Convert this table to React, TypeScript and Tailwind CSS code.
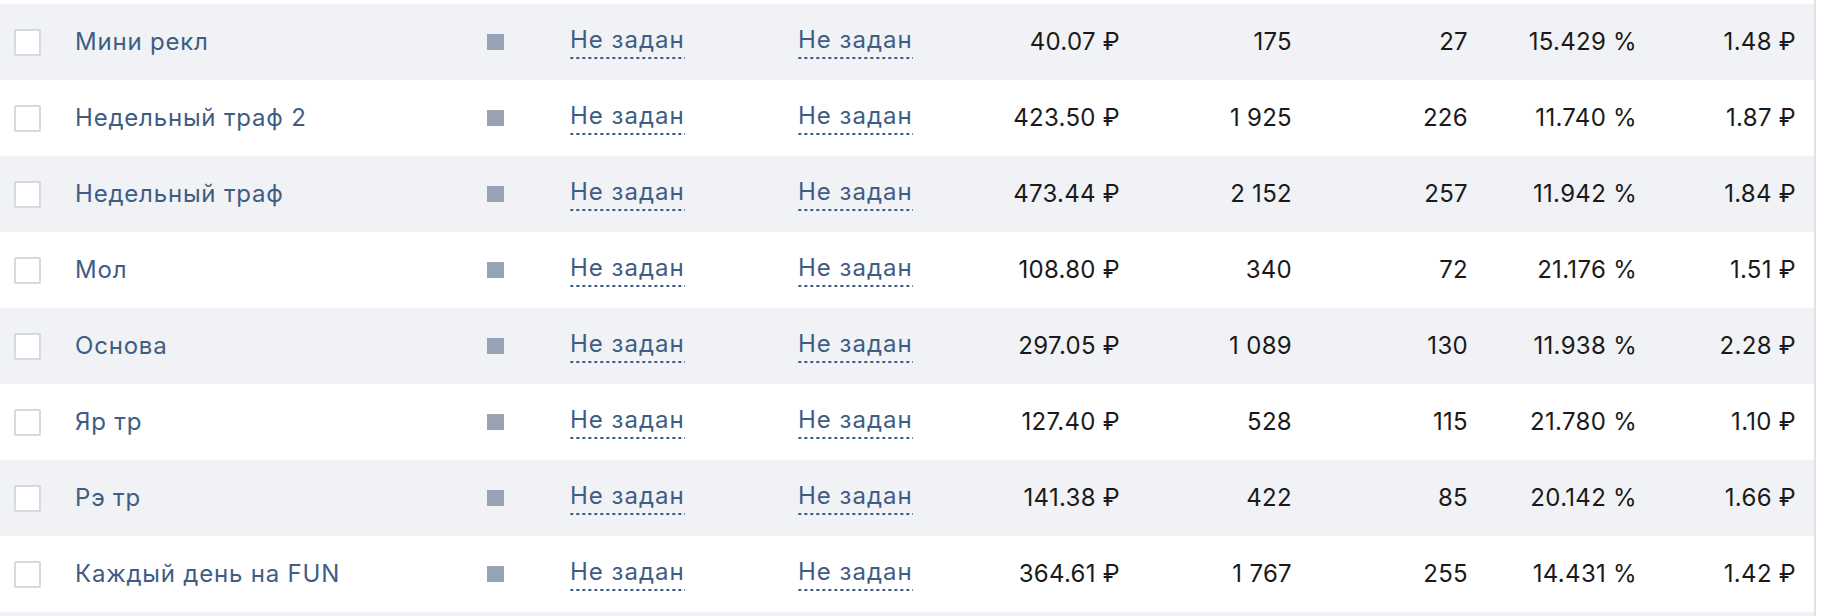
import React from "react";

type Row = { name: string; amount: string; shows: string; clicks: string; ctr: string; cpc: string };

const rows: Row[] = [
  { name: "Мини рекл", amount: "40.07 ₽", shows: "175", clicks: "27", ctr: "15.429 %", cpc: "1.48 ₽" },
  { name: "Недельный траф 2", amount: "423.50 ₽", shows: "1 925", clicks: "226", ctr: "11.740 %", cpc: "1.87 ₽" },
  { name: "Недельный траф", amount: "473.44 ₽", shows: "2 152", clicks: "257", ctr: "11.942 %", cpc: "1.84 ₽" },
  { name: "Мол", amount: "108.80 ₽", shows: "340", clicks: "72", ctr: "21.176 %", cpc: "1.51 ₽" },
  { name: "Основа", amount: "297.05 ₽", shows: "1 089", clicks: "130", ctr: "11.938 %", cpc: "2.28 ₽" },
  { name: "Яр тр", amount: "127.40 ₽", shows: "528", clicks: "115", ctr: "21.780 %", cpc: "1.10 ₽" },
  { name: "Рэ тр", amount: "141.38 ₽", shows: "422", clicks: "85", ctr: "20.142 %", cpc: "1.66 ₽" },
  { name: "Каждый день на FUN", amount: "364.61 ₽", shows: "1 767", clicks: "255", ctr: "14.431 %", cpc: "1.42 ₽" },
];

function Link() {
  return (
    <span className="inline-block text-[#3f5d84] tracking-[1px] leading-[28px] pb-[5px] bg-[linear-gradient(to_right,#3f5d84_50%,transparent_50%)] bg-[length:6px_2px] bg-repeat-x bg-bottom">
      Не задан
    </span>
  );
}

export default function App() {
  return (
    <div
      className="w-[1824px] h-[616px] bg-white overflow-hidden"
      style={{ fontFamily: "Inter, 'Noto Sans', sans-serif" }}
    >
      <div className="w-[1816px] h-[616px] border-r-2 border-[#dde2e7] pt-[4px] overflow-hidden">
        {[...rows, null].map((r, i) => (
          <div
            key={i}
            className={`flex items-center h-[76px] text-[24px] ${i % 2 === 0 ? "bg-[#f0f2f5]" : "bg-white"}`}
          >
            {r && (
              <>
                <div className="ml-[14px] w-[27px] h-[27px] bg-white border-2 border-[#d5dae0] rounded-[2px] shrink-0" />
                <div className="ml-[34px] w-[412px] shrink-0 text-[#3f5d84] tracking-[0.8px]">{r.name}</div>
                <div className="w-[17px] h-[16px] bg-[#97a3b4] shrink-0" />
                <div className="ml-[66px] w-[228px] shrink-0 flex">
                  <Link />
                </div>
                <div className="w-[119px] shrink-0 flex">
                  <Link />
                </div>
                <div className="w-[203px] shrink-0 text-right text-[#1a1a1a] tracking-[0.3px]">{r.amount}</div>
                <div className="w-[172px] shrink-0 text-right text-[#1a1a1a] tracking-[0.3px]">{r.shows}</div>
                <div className="w-[176px] shrink-0 text-right text-[#1a1a1a] tracking-[0.3px]">{r.clicks}</div>
                <div className="w-[169px] shrink-0 text-right text-[#1a1a1a] tracking-[0.3px]">{r.ctr}</div>
                <div className="w-[159px] shrink-0 text-right text-[#1a1a1a] tracking-[0.3px]">{r.cpc}</div>
              </>
            )}
          </div>
        ))}
      </div>
    </div>
  );
}
